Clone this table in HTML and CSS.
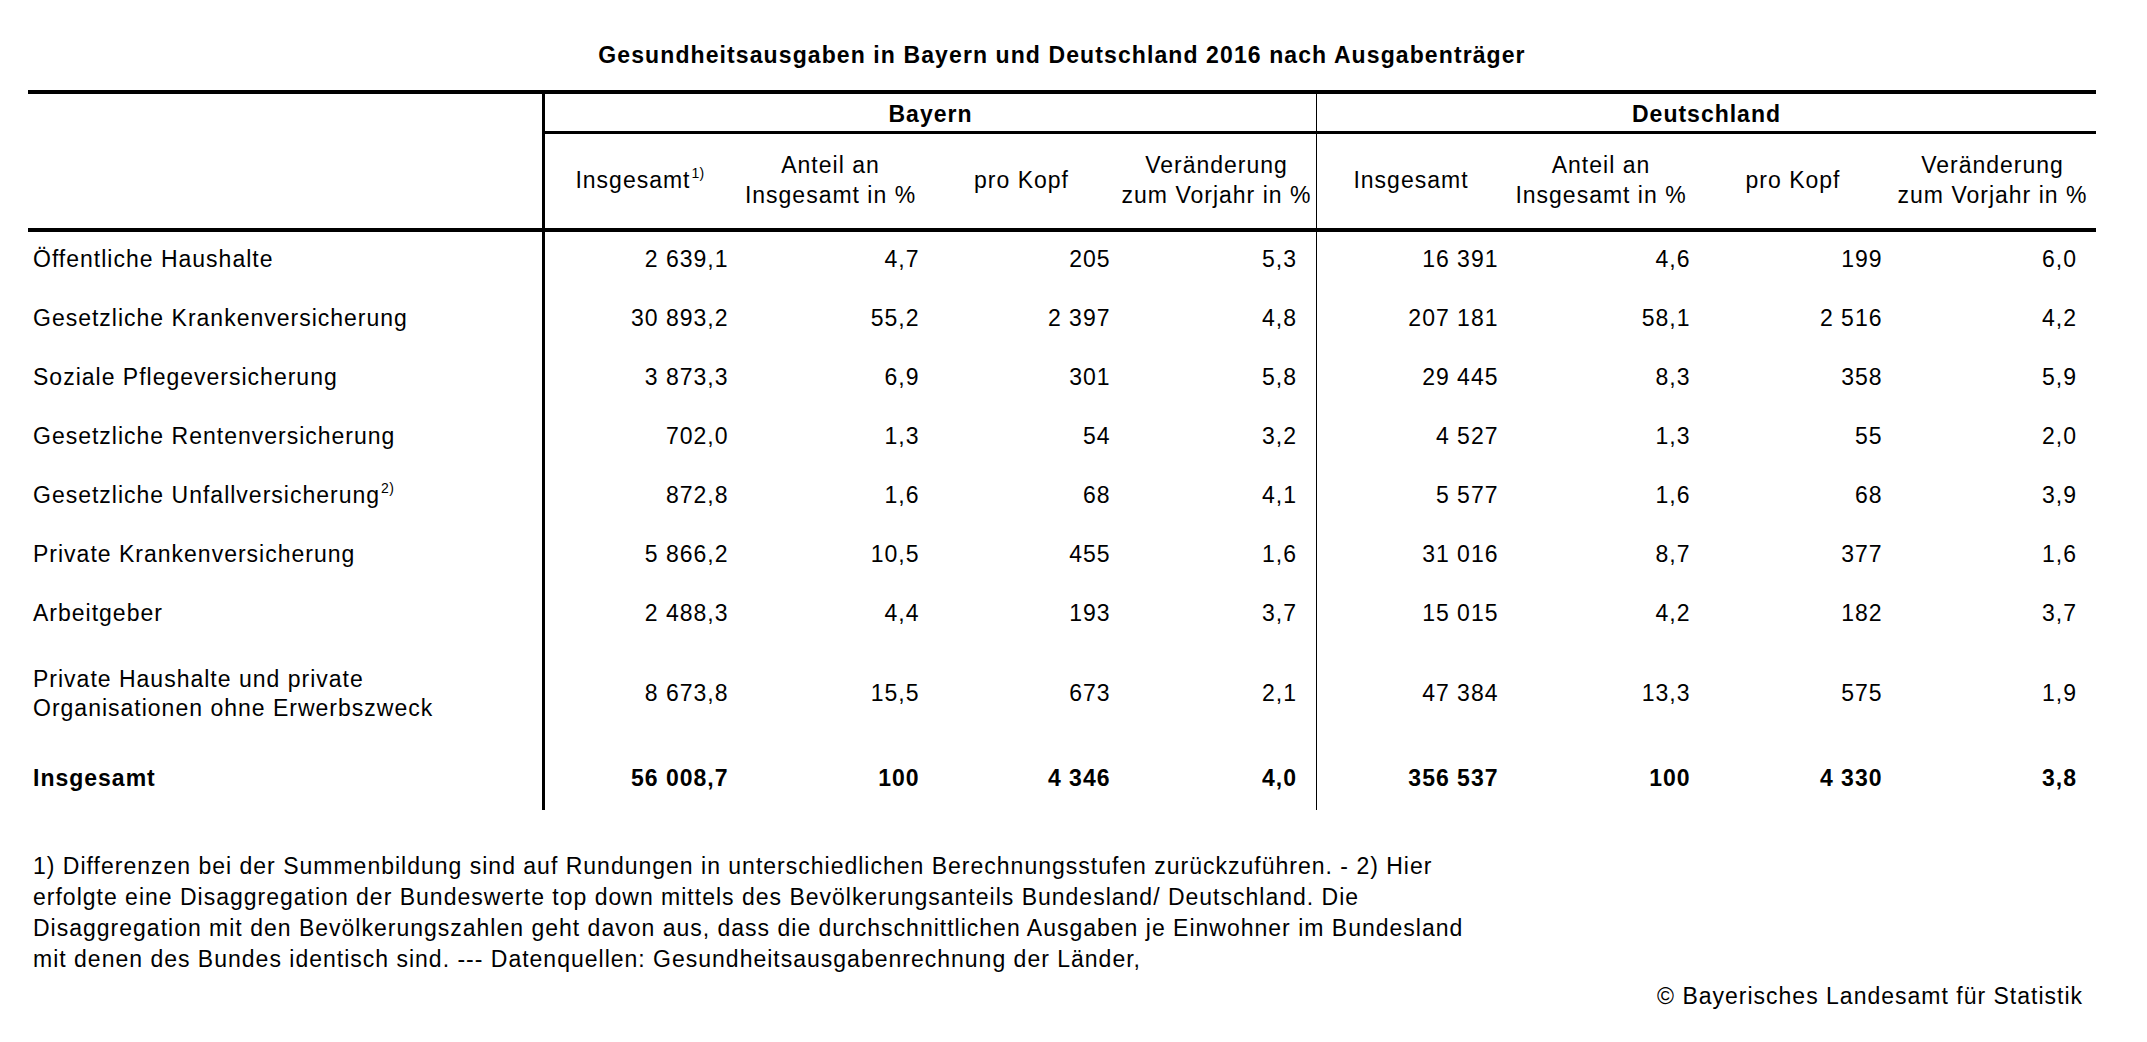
FILE: index.html
```html
<!DOCTYPE html>
<html lang="de">
<head>
<meta charset="utf-8">
<title>Gesundheitsausgaben in Bayern und Deutschland 2016</title>
<link rel="stylesheet" href="styles.css">
</head>
<body>
<div class="page">
  <h1 class="title">Gesundheitsausgaben in Bayern und Deutschland 2016 nach Ausgabenträger</h1>

  <div class="table">
    <div class="thead">
      <div class="h-label"></div>
      <div class="h-group g-by">Bayern</div>
      <div class="h-group g-de">Deutschland</div>
      <div class="h-col c1 by-first"><span>Insgesamt<sup class="fn">1)</sup></span></div>
      <div class="h-col c2">Anteil an<br>Insgesamt in %</div>
      <div class="h-col c3">pro Kopf</div>
      <div class="h-col c4">Veränderung<br>zum Vorjahr in %</div>
      <div class="h-col c5 de-first">Insgesamt</div>
      <div class="h-col c6">Anteil an<br>Insgesamt in %</div>
      <div class="h-col c7">pro Kopf</div>
      <div class="h-col c8">Veränderung<br>zum Vorjahr in %</div>
    </div>

    <div class="row">
      <div class="lbl">Öffentliche Haushalte</div>
      <div class="num by-first">2 639,1</div><div class="num">4,7</div><div class="num">205</div><div class="num last">5,3</div>
      <div class="num de-first">16 391</div><div class="num">4,6</div><div class="num">199</div><div class="num last">6,0</div>
    </div>
    <div class="row">
      <div class="lbl">Gesetzliche Krankenversicherung</div>
      <div class="num by-first">30 893,2</div><div class="num">55,2</div><div class="num">2 397</div><div class="num last">4,8</div>
      <div class="num de-first">207 181</div><div class="num">58,1</div><div class="num">2 516</div><div class="num last">4,2</div>
    </div>
    <div class="row">
      <div class="lbl">Soziale Pflegeversicherung</div>
      <div class="num by-first">3 873,3</div><div class="num">6,9</div><div class="num">301</div><div class="num last">5,8</div>
      <div class="num de-first">29 445</div><div class="num">8,3</div><div class="num">358</div><div class="num last">5,9</div>
    </div>
    <div class="row">
      <div class="lbl">Gesetzliche Rentenversicherung</div>
      <div class="num by-first">702,0</div><div class="num">1,3</div><div class="num">54</div><div class="num last">3,2</div>
      <div class="num de-first">4 527</div><div class="num">1,3</div><div class="num">55</div><div class="num last">2,0</div>
    </div>
    <div class="row">
      <div class="lbl"><span>Gesetzliche Unfallversicherung<sup class="fn">2)</sup></span></div>
      <div class="num by-first">872,8</div><div class="num">1,6</div><div class="num">68</div><div class="num last">4,1</div>
      <div class="num de-first">5 577</div><div class="num">1,6</div><div class="num">68</div><div class="num last">3,9</div>
    </div>
    <div class="row">
      <div class="lbl">Private Krankenversicherung</div>
      <div class="num by-first">5 866,2</div><div class="num">10,5</div><div class="num">455</div><div class="num last">1,6</div>
      <div class="num de-first">31 016</div><div class="num">8,7</div><div class="num">377</div><div class="num last">1,6</div>
    </div>
    <div class="row">
      <div class="lbl">Arbeitgeber</div>
      <div class="num by-first">2 488,3</div><div class="num">4,4</div><div class="num">193</div><div class="num last">3,7</div>
      <div class="num de-first">15 015</div><div class="num">4,2</div><div class="num">182</div><div class="num last">3,7</div>
    </div>
    <div class="row row-tall">
      <div class="lbl lbl-2">Private Haushalte und private<br>Organisationen ohne Erwerbszweck</div>
      <div class="num by-first">8 673,8</div><div class="num">15,5</div><div class="num">673</div><div class="num last">2,1</div>
      <div class="num de-first">47 384</div><div class="num">13,3</div><div class="num">575</div><div class="num last">1,9</div>
    </div>
    <div class="row row-total">
      <div class="lbl">Insgesamt</div>
      <div class="num by-first">56 008,7</div><div class="num">100</div><div class="num">4 346</div><div class="num last">4,0</div>
      <div class="num de-first">356 537</div><div class="num">100</div><div class="num">4 330</div><div class="num last">3,8</div>
    </div>
  </div>

  <p class="notes">1) Differenzen bei der Summenbildung sind auf Rundungen in unterschiedlichen Berechnungsstufen zurückzuführen. - 2) Hier<br>erfolgte eine Disaggregation der Bundeswerte top down mittels des Bevölkerungsanteils Bundesland/ Deutschland. Die<br>Disaggregation mit den Bevölkerungszahlen geht davon aus, dass die durchschnittlichen Ausgaben je Einwohner im Bundesland<br>mit denen des Bundes identisch sind. --- Datenquellen: Gesundheitsausgabenrechnung der Länder,</p>

  <div class="copyright">© Bayerisches Landesamt für Statistik</div>
</div>
</body>
</html>
```

FILE: styles.css
```css
* {
  box-sizing: border-box;
}

html, body {
  margin: 0;
  padding: 0;
  background: #ffffff;
}

body {
  font-family: "Liberation Sans", Arial, sans-serif;
  font-size: 23px;
  letter-spacing: 1px;
  color: #000000;
}

.page {
  width: 2068px;
  margin-left: 28px;
  padding-top: 40px;
}

.title {
  margin: 0 0 20px 0;
  height: 30px;
  line-height: 30px;
  font-size: 23px;
  font-weight: bold;
  letter-spacing: 1.1px;
  text-align: center;
  white-space: nowrap;
}

.table {
  border-top: 4px solid #000;
}

.thead,
.row {
  display: grid;
  grid-template-columns: 514px 193px 191px 191px 199px 189px 192px 192px 207px;
}

.thead {
  grid-template-rows: 40px 98px;
}

.h-label {
  grid-row: 1 / 3;
  grid-column: 1;
  border-bottom: 4px solid #000;
}

.h-group {
  grid-row: 1;
  display: flex;
  align-items: center;
  justify-content: center;
  padding-top: 4px;
  font-weight: bold;
  border-bottom: 3px solid #000;
  white-space: nowrap;
}

.g-by {
  grid-column: 2 / 6;
  border-left: 3px solid #000;
}

.g-de {
  grid-column: 6 / 10;
  border-left: 1px solid #000;
}

.h-col {
  grid-row: 2;
  display: flex;
  align-items: center;
  justify-content: center;
  text-align: center;
  line-height: 30px;
  padding-bottom: 2px;
  white-space: nowrap;
  border-bottom: 4px solid #000;
}

.c1 { grid-column: 2; }
.c2 { grid-column: 3; }
.c3 { grid-column: 4; }
.c4 { grid-column: 5; }
.c5 { grid-column: 6; }
.c6 { grid-column: 7; }
.c7 { grid-column: 8; }
.c8 { grid-column: 9; }

.by-first {
  border-left: 3px solid #000;
}

.de-first {
  border-left: 1px solid #000;
}

.fn {
  font-size: 14px;
  letter-spacing: 0.3px;
  line-height: 0;
  vertical-align: 10px;
  margin-left: 1px;
}

.row {
  height: 59px;
}

.row > div {
  display: flex;
  align-items: center;
  padding-bottom: 4px;
  white-space: nowrap;
}

.lbl {
  padding-left: 5px;
}

.lbl-2 {
  line-height: 29px;
}

.num {
  justify-content: flex-end;
  padding-right: 6.5px;
}

.num.last {
  padding-right: 19px;
}

.row-tall {
  height: 97px;
}

.row-tall > div {
  padding-bottom: 0;
}

.row-total {
  height: 68px;
  font-weight: bold;
}

.row-total > div {
  padding-bottom: 0;
  padding-top: 5px;
}

.notes {
  margin: 41px 0 0 0;
  padding-left: 5px;
  line-height: 31px;
  white-space: nowrap;
}

.copyright {
  display: flex;
  justify-content: flex-end;
  margin-top: 6px;
  padding-right: 13px;
  line-height: 31px;
  white-space: nowrap;
}
```
